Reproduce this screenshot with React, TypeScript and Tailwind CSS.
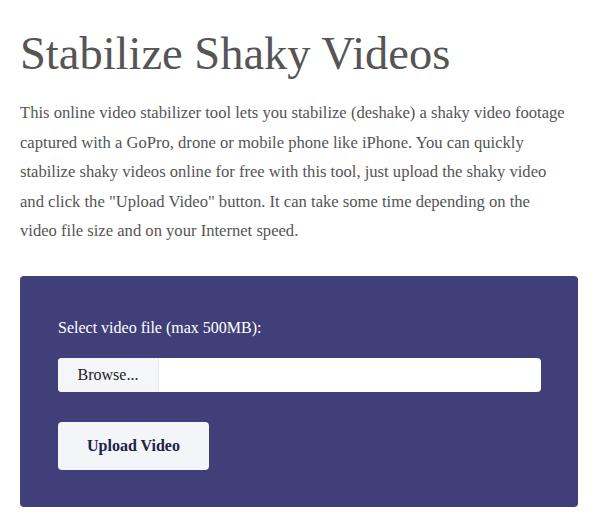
export default function App() {
  const serif = "font-['Liberation_Serif','DejaVu_Serif',serif]"

  return (
    <div className={`min-h-[520px] bg-white px-5 pt-[27px] ${serif}`}>
      <h1 className="text-[46.5px] leading-[54px] font-normal text-[#555555]">
        Stabilize Shaky Videos
      </h1>

      <p className="mt-[17px] text-[16.6px] leading-[29.6px] text-[#555555] whitespace-nowrap">
        This online video stabilizer tool lets you stabilize (deshake) a shaky video footage
        <br />
        captured with a GoPro, drone or mobile phone like iPhone. You can quickly
        <br />
        stabilize shaky videos online for free with this tool, just upload the shaky video
        <br />
        and click the "Upload Video" button. It can take some time depending on the
        <br />
        video file size and on your Internet speed.
      </p>

      <form className="mt-[30px] w-[558px] rounded-[4px] bg-[#413f79] px-[38px] pt-[41px] pb-[37px]">
        <label className="block text-[16px] leading-[22px] text-white">
          Select video file (max 500MB):
        </label>

        <div className="mt-[19px] flex h-[34px] w-[483px] overflow-hidden rounded-[4px] bg-white">
          <span className="flex w-[101px] items-center justify-center border-r border-[#e6e7ec] bg-[#f5f6f9] text-[16px] text-[#222222]">
            Browse...
          </span>
          <span className="flex-1" />
        </div>

        <button
          type="button"
          className="mt-[30px] flex h-[48px] w-[151px] items-center justify-center rounded-[4px] bg-[#f4f5f9] text-[16px] font-bold text-[#1e2248]"
        >
          Upload Video
        </button>
      </form>
    </div>
  )
}
